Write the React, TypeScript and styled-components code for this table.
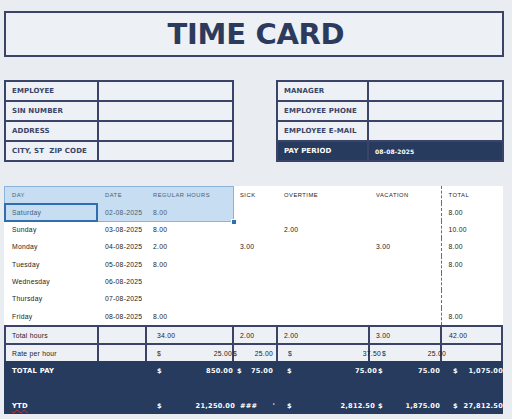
import React from "react";
import styled, { createGlobalStyle } from "styled-components";

const NAVY = "#3b4468";
const DARK = "#263b5e";
const PAGE = "#e9edf1";

const Global = createGlobalStyle`
  html, body { margin: 0; padding: 0; background: ${PAGE}; }
  body { font-family: "Liberation Sans", Arial, sans-serif; }
`;

const Page = styled.div`
  width: 512px;
  height: 419px;
  box-sizing: border-box;
  padding: 11px 8px 0 4px;
  display: flex;
  flex-direction: column;
  overflow: hidden;
`;

const TitleBox = styled.div`
  width: 500px;
  height: 46px;
  box-sizing: border-box;
  border: 2px solid ${NAVY};
  background: #edf0f4;
  display: flex;
  align-items: center;
  justify-content: center;
`;

const Title = styled.h1`
  margin: 0 0 0 4px;
  font-family: "DejaVu Sans", Verdana, sans-serif;
  font-weight: 700;
  font-size: 29px;
  letter-spacing: -0.3px;
  color: #2c3b5c;
`;

const InfoRow = styled.div`
  margin-top: 23px;
  display: flex;
  justify-content: space-between;
  width: 500px;
`;

const InfoTable = styled.div<{ $label: number; $w: number }>`
  width: ${(p) => p.$w}px;
  height: 82px;
  box-sizing: border-box;
  display: grid;
  grid-template-columns: ${(p) => p.$label}px 1fr;
  grid-template-rows: repeat(4, 1fr);
  gap: 2px;
  padding: 2px;
  background: ${NAVY};
`;

const InfoCell = styled.div<{ $dark?: boolean; $pad?: number }>`
  background: ${(p) => (p.$dark ? DARK : "#edf0f4")};
  display: flex;
  align-items: center;
  padding-left: ${(p) => p.$pad ?? 6}px;
  font-family: "DejaVu Sans", Verdana, sans-serif;
  font-weight: 700;
  font-size: 7px;
  letter-spacing: 0.1px;
  color: ${(p) => (p.$dark ? "#ffffff" : "#3a4466")};
`;

const DateText = styled.span`
  font-size: 6px;
`;

const Sheet = styled.div`
  margin-top: 24px;
  width: 499px;
  display: flex;
  flex-direction: column;
`;

const COLS = "91px 46px 85px 42px 90px 70px 59px";

const Body = styled.div`
  position: relative;
  height: 139px;
  background: #ffffff;
  display: grid;
  grid-template-columns: ${COLS};
  grid-template-rows: repeat(8, 1fr);
  column-gap: 2px;
  padding: 0 2px;
`;

const Cell = styled.div<{ $dashed?: boolean; $head?: boolean }>`
  display: flex;
  align-items: center;
  padding-left: ${(p) => (p.$dashed ? 7 : 6)}px;
  font-size: ${(p) => (p.$head ? 5.8 : 6.8)}px;
  letter-spacing: ${(p) => (p.$head ? 0.5 : 0.25)}px;
  color: #1c1c1c;
  white-space: nowrap;
  ${(p) =>
    p.$dashed
      ? `border-left: 1px dashed #6c6c6c; margin-left: -1.5px;`
      : ""}
`;

const Selection = styled.div`
  position: absolute;
  left: 0;
  top: 0;
  width: 230px;
  height: 36px;
  background: rgba(120, 175, 225, 0.42);
  box-shadow: inset 0 0 0 1px rgba(80, 140, 200, 0.5);
  pointer-events: none;
`;

const ActiveCell = styled.div`
  position: absolute;
  left: 0;
  top: 17px;
  width: 94px;
  height: 19px;
  box-sizing: border-box;
  border: 2px solid #2f6fb0;
  pointer-events: none;
`;

const Handle = styled.div`
  position: absolute;
  left: 227px;
  top: 33px;
  width: 4px;
  height: 4px;
  background: #2f6fb0;
  border: 1px solid #fff;
`;

const Totals = styled.div`
  display: grid;
  grid-template-columns: ${COLS};
  grid-template-rows: 16px 16px;
  gap: 2px;
  padding: 2px 2px 0 2px;
  background: ${NAVY};
`;

const TCell = styled.div<{ $pad?: number }>`
  background: #edf0f4;
  display: flex;
  align-items: center;
  padding-left: ${(p) => p.$pad ?? 6}px;
  font-size: 6.8px;
  letter-spacing: 0.25px;
  color: #1c1c1c;
  white-space: nowrap;
`;

const MoneyCell = styled.div`
  background: #edf0f4;
  display: flex;
  align-items: center;
  white-space: nowrap;
`;

const Money = styled.div<{ $l: number; $r: number; $light?: boolean }>`
  position: relative;
  z-index: 1;
  flex: 1;
  display: flex;
  justify-content: space-between;
  margin: 0 ${(p) => p.$r}px 0 ${(p) => p.$l}px;
  font-size: ${(p) => (p.$light ? 6.6 : 6.8)}px;
  letter-spacing: 0.25px;
  color: ${(p) => (p.$light ? "#ffffff" : "#1c1c1c")};
  font-family: ${(p) =>
    p.$light ? `"DejaVu Sans", Verdana, sans-serif` : `"Liberation Sans", Arial, sans-serif`};
  font-weight: ${(p) => (p.$light ? 700 : 400)};
  white-space: nowrap;
`;

const Summary = styled.div`
  height: 53px;
  background: ${DARK};
  display: grid;
  grid-template-columns: ${COLS};
  grid-template-rows: 20px 1fr 17px;
  column-gap: 2px;
  padding: 0 2px;
`;

const SumLabel = styled.div<{ $row: number; $squiggle?: boolean }>`
  grid-row: ${(p) => p.$row};
  grid-column: 1 / span 2;
  display: flex;
  align-items: center;
  padding-left: 6px;
  font-family: "DejaVu Sans", Verdana, sans-serif;
  font-weight: 700;
  font-size: 6.8px;
  letter-spacing: 0.2px;
  color: #ffffff;
  span {
    ${(p) =>
      p.$squiggle
        ? `text-decoration: underline wavy #d0312d; text-decoration-thickness: 1px; text-underline-offset: 1px;`
        : ""}
  }
`;

const SumCell = styled.div<{ $row: number }>`
  grid-row: ${(p) => p.$row};
  display: flex;
  align-items: center;
  white-space: nowrap;
`;

type Row = { day: string; date: string; reg?: string; sick?: string; ot?: string; vac?: string; total?: string };

const rows: Row[] = [
  { day: "Saturday", date: "02-08-2025", reg: "8.00", total: "8.00" },
  { day: "Sunday", date: "03-08-2025", reg: "8.00", ot: "2.00", total: "10.00" },
  { day: "Monday", date: "04-08-2025", reg: "2.00", sick: "3.00", vac: "3.00", total: "8.00" },
  { day: "Tuesday", date: "05-08-2025", reg: "8.00", total: "8.00" },
  { day: "Wednesday", date: "06-08-2025" },
  { day: "Thursday", date: "07-08-2025" },
  { day: "Friday", date: "08-08-2025", reg: "8.00", total: "8.00" },
];

type M = { a: string; b: string; l: number; r: number };

const payRow: M[] = [
  { a: "$", b: "850.00", l: 10, r: -1 },
  { a: "$", b: "75.00", l: 3, r: 3 },
  { a: "$", b: "75.00", l: 9, r: -9 },
  { a: "$", b: "75.00", l: 8, r: 0 },
  { a: "$", b: "1,075.00", l: 11, r: -2 },
];

const ytdRow: M[] = [
  { a: "$", b: "21,250.00", l: 10, r: -3 },
  { a: "###", b: "'", l: 6, r: 1 },
  { a: "$", b: "2,812.50", l: 9, r: -7 },
  { a: "$", b: "1,875.00", l: 8, r: 0 },
  { a: "$", b: "27,812.50", l: 11, r: -2 },
];

const rateRow: M[] = [
  { a: "$", b: "25.00", l: 10, r: 0 },
  { a: "$", b: "25.00", l: -1, r: 3 },
  { a: "$", b: "37.50", l: 10, r: -13 },
  { a: "$", b: "25.00", l: 12, r: -6 },
];

export default function App() {
  return (
    <>
      <Global />
      <Page>
        <TitleBox>
          <Title>TIME CARD</Title>
        </TitleBox>

        <InfoRow>
          <InfoTable $w={230} $label={91}>
            <InfoCell>EMPLOYEE</InfoCell>
            <InfoCell />
            <InfoCell>SIN NUMBER</InfoCell>
            <InfoCell />
            <InfoCell>ADDRESS</InfoCell>
            <InfoCell />
            <InfoCell>CITY, ST&nbsp; ZIP CODE</InfoCell>
            <InfoCell />
          </InfoTable>
          <InfoTable $w={228} $label={89}>
            <InfoCell>MANAGER</InfoCell>
            <InfoCell />
            <InfoCell>EMPLOYEE PHONE</InfoCell>
            <InfoCell />
            <InfoCell>EMPLOYEE E-MAIL</InfoCell>
            <InfoCell />
            <InfoCell $dark>PAY PERIOD</InfoCell>
            <InfoCell $dark $pad={6}>
              <DateText>08-08-2025</DateText>
            </InfoCell>
          </InfoTable>
        </InfoRow>

        <Sheet>
          <Body>
            <Cell $head>DAY</Cell>
            <Cell $head>DATE</Cell>
            <Cell $head>REGULAR HOURS</Cell>
            <Cell $head>SICK</Cell>
            <Cell $head>OVERTIME</Cell>
            <Cell $head>VACATION</Cell>
            <Cell $head $dashed>TOTAL</Cell>
            {rows.map((r) => (
              <React.Fragment key={r.day}>
                <Cell>{r.day}</Cell>
                <Cell>{r.date}</Cell>
                <Cell>{r.reg}</Cell>
                <Cell>{r.sick}</Cell>
                <Cell>{r.ot}</Cell>
                <Cell>{r.vac}</Cell>
                <Cell $dashed>{r.total}</Cell>
              </React.Fragment>
            ))}
            <Selection />
            <ActiveCell />
            <Handle />
          </Body>

          <Totals>
            <TCell>Total hours</TCell>
            <TCell />
            <TCell $pad={10}>34.00</TCell>
            <TCell>2.00</TCell>
            <TCell>2.00</TCell>
            <TCell>3.00</TCell>
            <TCell $pad={7}>42.00</TCell>

            <TCell>Rate per hour</TCell>
            <TCell />
            {rateRow.map((m, i) => (
              <MoneyCell key={i}>
                <Money $l={m.l} $r={m.r}>
                  <span>{m.a}</span>
                  <span>{m.b}</span>
                </Money>
              </MoneyCell>
            ))}
            <TCell />
          </Totals>

          <Summary>
            <SumLabel $row={1}>TOTAL PAY</SumLabel>
            {payRow.map((m, i) => (
              <SumCell key={"p" + i} $row={1}>
                <Money $light $l={m.l} $r={m.r}>
                  <span>{m.a}</span>
                  <span>{m.b}</span>
                </Money>
              </SumCell>
            ))}
            <SumLabel $row={3} $squiggle>
              <span>YTD</span>
            </SumLabel>
            {ytdRow.map((m, i) => (
              <SumCell key={"y" + i} $row={3}>
                <Money $light $l={m.l} $r={m.r}>
                  <span>{m.a}</span>
                  <span>{m.b}</span>
                </Money>
              </SumCell>
            ))}
          </Summary>
        </Sheet>
      </Page>
    </>
  );
}
